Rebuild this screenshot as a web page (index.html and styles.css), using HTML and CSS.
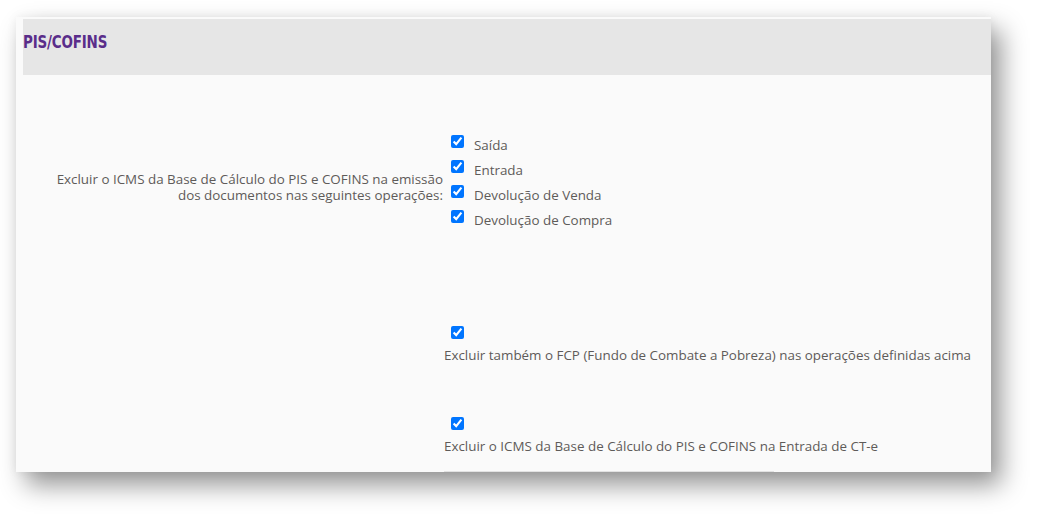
FILE: index.html
```html
<!DOCTYPE html>
<html lang="pt-BR">
<head>
<meta charset="utf-8">
<title>PIS/COFINS</title>
<link rel="stylesheet" href="styles.css">
</head>
<body>
<div class="panel">
  <div class="header"><h2 class="title">PIS/COFINS</h2></div>
  <div class="content">
    <div class="row row-ops">
      <div class="label">Excluir o ICMS da Base de Cálculo do PIS e COFINS na emissão dos documentos nas seguintes operações:</div>
      <div class="controls">
        <label class="check"><input type="checkbox" checked><span>Saída</span></label>
        <label class="check"><input type="checkbox" checked><span>Entrada</span></label>
        <label class="check"><input type="checkbox" checked><span>Devolução de Venda</span></label>
        <label class="check"><input type="checkbox" checked><span>Devolução de Compra</span></label>
      </div>
    </div>
    <div class="row row-single row-fcp">
      <div class="label"></div>
      <div class="controls">
        <input class="solo" type="checkbox" checked>
        <div class="desc">Excluir também o FCP (Fundo de Combate a Pobreza) nas operações definidas acima</div>
      </div>
    </div>
    <div class="row row-single row-cte">
      <div class="label"></div>
      <div class="controls">
        <input class="solo" type="checkbox" checked>
        <div class="desc">Excluir o ICMS da Base de Cálculo do PIS e COFINS na Entrada de CT-e</div>
        <div class="cut"></div>
      </div>
    </div>
  </div>
</div>
</body>
</html>
```
FILE: styles.css
```css
html, body {
  margin: 0;
  padding: 0;
  background: #ffffff;
  min-height: 521px;
}
body {
  font-family: "Open Sans", "DejaVu Sans", sans-serif;
  color: #5e5b59;
  font-size: 13.4px;
}
.panel {
  margin: 17px 0 0 16px;
  width: 975px;
  height: 455px;
  background: #fafafa;
  box-shadow: 10px 13px 24px rgba(0, 0, 0, 0.42), 0 0 10px rgba(0, 0, 0, 0.06);
  overflow: hidden;
  padding-top: 2px;
  box-sizing: border-box;
}
.header {
  margin-left: 7px;
  height: 56px;
  background: #e6e6e6;
  display: flex;
  align-items: center;
}
.title {
  margin: 0 0 11px 0;
  font-family: "DejaVu Sans Condensed", "DejaVu Sans", sans-serif;
  font-stretch: condensed;
  font-weight: bold;
  font-size: 18px;
  line-height: 20px;
  color: #5a2d8a;
  letter-spacing: -0.2px;
  transform: scaleX(0.83);
  transform-origin: left center;
}
.content {
  margin-left: 7px;
}
.row {
  display: flex;
}
.label {
  width: 420px;
  flex: none;
  text-align: right;
  line-height: 16px;
  box-sizing: border-box;
}
.row-ops .label {
  padding-left: 24px;
  margin-top: 3px;
}
.controls {
  margin-left: 1px;
  display: flex;
  flex-direction: column;
}
.row-ops {
  margin-top: 60px;
  align-items: center;
}
.check {
  display: flex;
  align-items: flex-start;
  height: 25px;
}
.check input {
  margin: 0 0 0 7px;
  width: 13px;
  height: 13px;
}
.check span {
  margin-left: 10px;
  line-height: 18px;
  margin-top: 1px;
}
.solo {
  margin: 0 0 0 7px;
  width: 13px;
  height: 13px;
}
.desc {
  line-height: 18px;
  margin-top: 7px;
}
.row-fcp {
  margin-top: 91px;
}
.row-cte {
  margin-top: 53px;
}
.cut {
  margin-top: 16px;
  width: 330px;
  height: 1px;
  background: #e2e2e2;
}
```
